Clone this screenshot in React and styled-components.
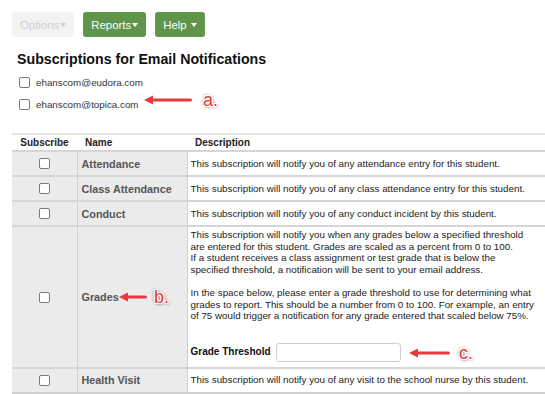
import React from "react";
import styled, { createGlobalStyle } from "styled-components";

const GlobalStyle = createGlobalStyle`
  body {
    margin: 0;
    font-family: "Liberation Sans", Arial, sans-serif;
    background: #fff;
    overflow: hidden;
  }
`;

const rows = [
  { name: "Attendance", text: "This subscription will notify you of any attendance entry for this student." },
  { name: "Class Attendance", text: "This subscription will notify you of any class attendance entry for this student." },
  { name: "Conduct", text: "This subscription will notify you of any conduct incident by this student." },
  { name: "Grades", grades: true },
  { name: "Health Visit", text: "This subscription will notify you of any visit to the school nurse by this student." },
];

const Arrow = ({ width }) => (
  <svg width={width} height="10" viewBox={`0 0 ${width} 10`}>
    <path d={`M${width - 1.5} 5 H7`} stroke="#e53a3e" strokeWidth="3" strokeLinecap="round" />
    <path d="M0 5 L9 0.5 L9 9.5 Z" fill="#e53a3e" />
  </svg>
);

const Annotation = ({ x, y, width, gap, letter }) => (
  <Note style={{ left: x, top: y }}>
    <Arrow width={width} />
    <Letter $gap={gap}>{letter}</Letter>
  </Note>
);

const App = () => {
  return (
    <Page>
      <GlobalStyle />
      <Toolbar>
        <MenuButton $disabled>
          Options<Caret />
        </MenuButton>
        <MenuButton>
          Reports<Caret />
        </MenuButton>
        <MenuButton>
          Help <Caret />
        </MenuButton>
      </Toolbar>
      <Title>Subscriptions for Email Notifications</Title>
      <EmailList>
        <EmailRow>
          <Check />
          ehanscom@eudora.com
        </EmailRow>
        <EmailRow>
          <Check />
          ehanscom@topica.com
        </EmailRow>
      </EmailList>
      <Table>
        <thead>
          <tr>
            <Th $center>Subscribe</Th>
            <Th>Name</Th>
            <Th>Description</Th>
          </tr>
        </thead>
        <tbody>
          {rows.map((r) => (
            <tr key={r.name}>
              <CheckCell>
                <Check />
              </CheckCell>
              <NameCell>{r.name}</NameCell>
              {r.grades ? (
                <DescCell $tall>
                  <Para>
                    This subscription will notify you when any grades below a specified threshold
                    <br />
                    are entered for this student. Grades are scaled as a percent from 0 to 100.
                    <br />
                    If a student receives a class assignment or test grade that is below the
                    <br />
                    specified threshold, a notification will be sent to your email address.
                  </Para>
                  <Para>
                    In the space below, please enter a grade threshold to use for determining what
                    <br />
                    grades to report. This should be a number from 0 to 100. For example, an entry
                    <br />
                    of 75 would trigger a notification for any grade entered that scaled below 75%.
                  </Para>
                  <ThresholdRow>
                    <ThresholdLabel>Grade Threshold</ThresholdLabel>
                    <ThresholdInput type="text" />
                  </ThresholdRow>
                </DescCell>
              ) : (
                <DescCell>{r.text}</DescCell>
              )}
            </tr>
          ))}
        </tbody>
      </Table>
      <Annotation x={144} y={91} width={48} gap={11} letter="a." />
      <Annotation x={119} y={288} width={28} gap={7} letter="b." />
      <Annotation x={409} y={344} width={41} gap={9} letter="c." />
    </Page>
  );
};

const Page = styled.div`
  position: relative;
  width: 545px;
  height: 394px;
  overflow: hidden;
`;

const Toolbar = styled.div`
  display: flex;
  gap: 9px;
  padding: 12px 0 0 12px;
`;

const MenuButton = styled.div`
  display: flex;
  align-items: center;
  justify-content: center;
  height: 25px;
  padding: 0 8px;
  border-radius: 3px;
  font-size: 11.4px;
  background: ${(p) => (p.$disabled ? "#f3f3f3" : "#5e954b")};
  color: ${(p) => (p.$disabled ? "#cfcfcf" : "#fff")};
  white-space: pre;
`;

const Caret = styled.span`
  display: inline-block;
  margin-left: 1px;
  margin-top: 1px;
  border-left: 3.5px solid transparent;
  border-right: 3.5px solid transparent;
  border-top: 4px solid currentColor;
`;

const Title = styled.h2`
  margin: 14px 0 0 17px;
  font-size: 14.2px;
  font-weight: bold;
  color: #111;
  line-height: 17px;
`;

const EmailList = styled.div`
  display: flex;
  flex-direction: column;
  gap: 9px;
  margin: 8px 0 0 19px;
`;

const EmailRow = styled.label`
  display: flex;
  align-items: center;
  gap: 6px;
  font-size: 9.8px;
  color: #333;
  height: 13px;
`;

const Check = styled.span`
  display: inline-block;
  width: 9px;
  height: 9px;
  border: 1px solid #7a7a7a;
  border-radius: 2px;
  background: #fff;
`;

const Table = styled.table`
  margin: 22px 0 0 12px;
  width: 560px;
  border-collapse: collapse;
  font-size: 9.8px;
  border-top: 2px solid #e4e4e4;
  border-bottom: 2px solid #cfcfcf;
`;

const Th = styled.th`
  height: 15px;
  padding: 0 0 0 ${(p) => (p.$center ? "0" : "8px")};
  text-align: ${(p) => (p.$center ? "center" : "left")};
  font-weight: bold;
  font-size: 10px;
  color: #222;
  border-bottom: 2px solid #d6d6d6;
  &:first-child {
    width: 65px;
  }
  &:nth-child(2) {
    width: 102px;
  }
`;

const Cell = styled.td`
  border-top: 2px solid #d6d6d6;
  height: 23px;
  padding: 0;
  vertical-align: middle;
`;

const CheckCell = styled(Cell)`
  background: #ebebeb;
  text-align: center;
  border-right: 1px solid #d0d0d0;
  & > span {
    vertical-align: middle;
  }
`;

const NameCell = styled(Cell)`
  background: #ebebeb;
  font-weight: bold;
  color: #555;
  font-size: 10.8px;
  padding-left: 4px;
  border-right: 1px solid #d0d0d0;
`;

const DescCell = styled(Cell)`
  color: #222;
  padding: ${(p) => (p.$tall ? "2px 0 5px 3px" : "0 0 0 3px")};
  vertical-align: ${(p) => (p.$tall ? "top" : "middle")};
  line-height: 11.6px;
`;

const Para = styled.p`
  margin: 0 0 11.6px;
`;

const ThresholdRow = styled.div`
  display: flex;
  align-items: center;
  gap: 5px;
  margin-top: 21px;
`;

const ThresholdLabel = styled.span`
  font-weight: bold;
  font-size: 10px;
  color: #111;
`;

const ThresholdInput = styled.input`
  width: 123px;
  height: 17px;
  padding: 0;
  border: 1px solid #cfcfcf;
  border-radius: 3px;
  outline: none;
`;

const Note = styled.div`
  position: absolute;
  display: flex;
  align-items: center;
`;

const Letter = styled.span`
  margin-left: ${(p) => p.$gap}px;
  font-size: 18px;
  font-family: "Liberation Sans", Arial, sans-serif;
  color: #e5383c;
  text-shadow: 1px 1px 0 #fff, -1px -1px 0 #fff, 1px -1px 0 #fff, -1px 1px 0 #fff,
    1px 0 0 #fff, -1px 0 0 #fff, 0 1px 0 #fff, 0 -1px 0 #fff,
    1px 1px 3px rgba(0, 0, 0, 0.75), -1px -1px 3px rgba(0, 0, 0, 0.45);
  line-height: 1;
`;

export default App;
